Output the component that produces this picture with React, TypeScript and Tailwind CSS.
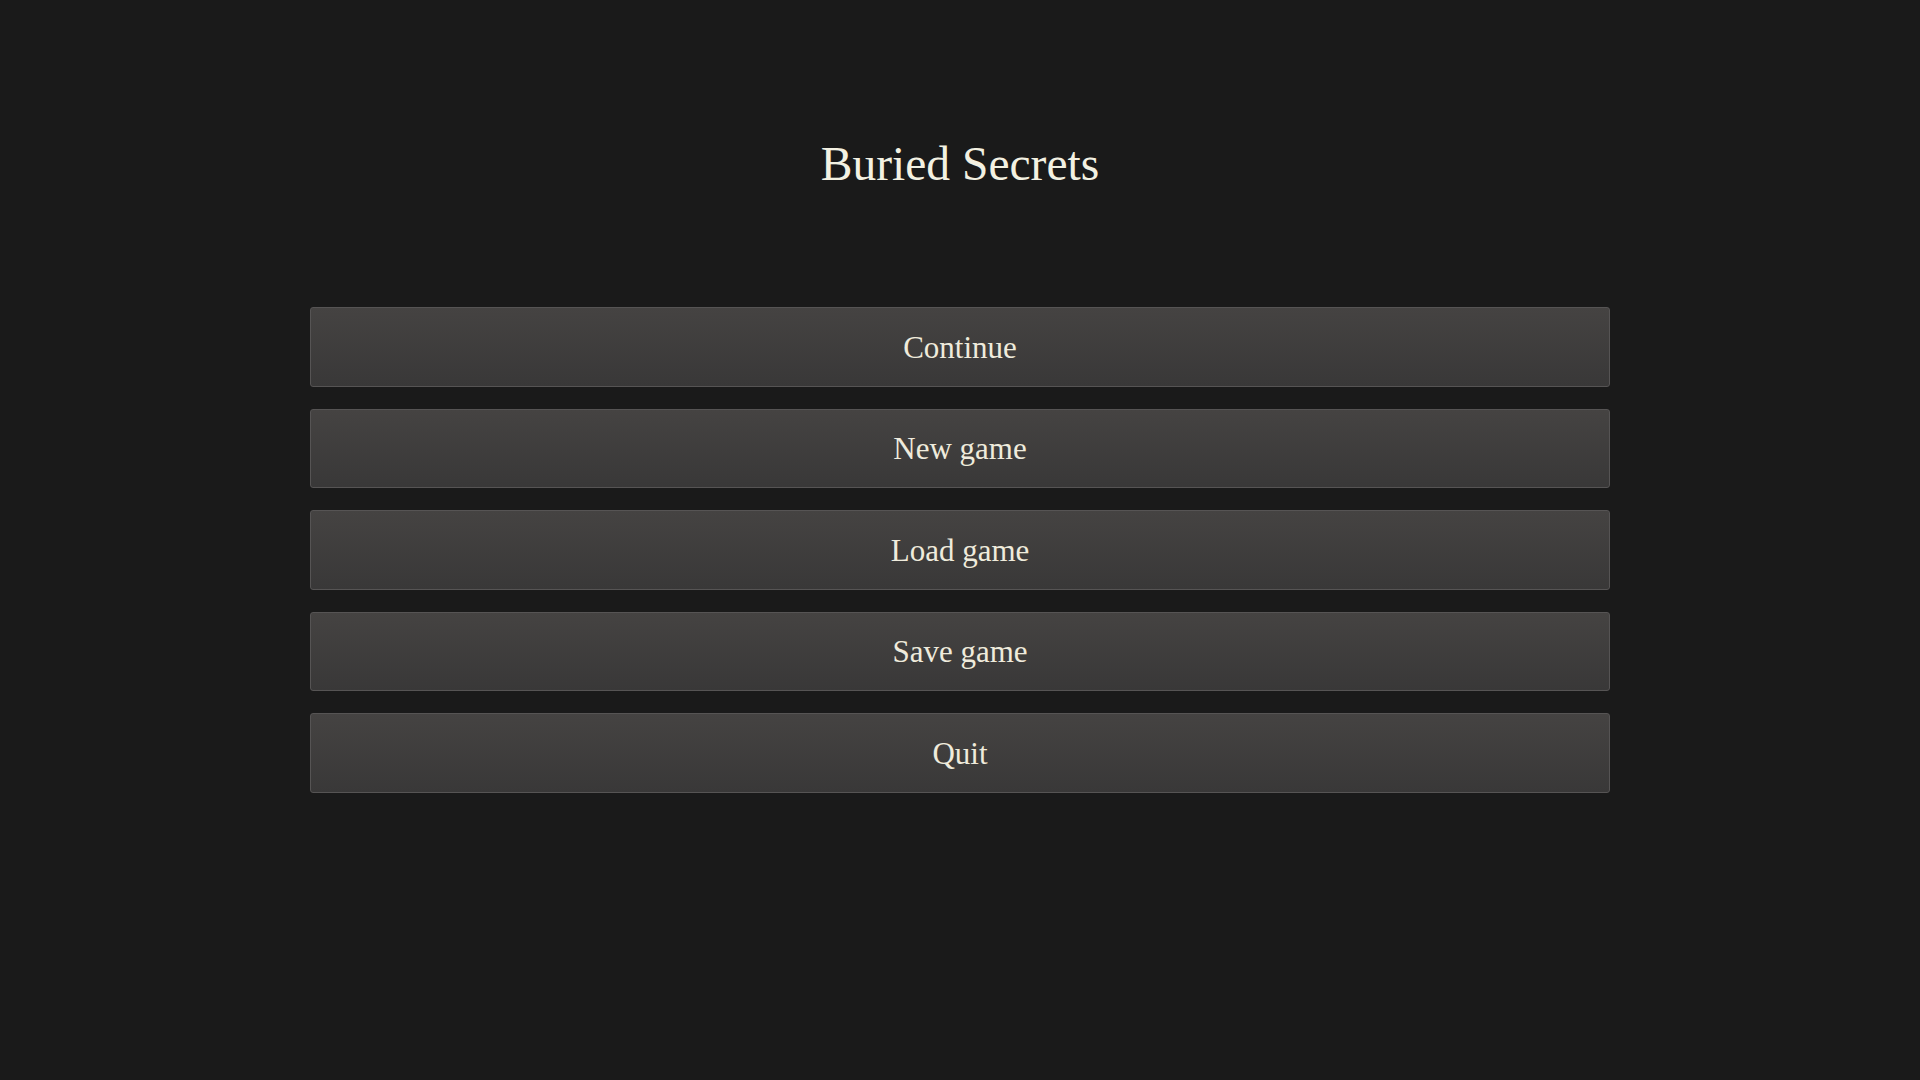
const items = ["Continue", "New game", "Load game", "Save game", "Quit"];

export default function App() {
  return (
    <div className="min-h-screen w-full bg-[#1a1a1a] font-['Liberation_Serif',serif]">
      <div className="mx-auto flex w-[1300px] flex-col items-center pt-[138px]">
        {/* Title */}
        <h1 className="text-[47.5px] leading-[53px] text-[#f3f1e2]">Buried Secrets</h1>

        {/* Menu */}
        <div className="mt-[116px] flex w-full flex-col gap-[22px]">
          {items.map((label) => (
            <button
              key={label}
              className="flex h-[79.5px] w-full items-center justify-center rounded-[3px] border border-[#565454] bg-gradient-to-b from-[#454342] to-[#393838] pt-[2px] text-[31px] text-[#efebdc]"
            >
              {label}
            </button>
          ))}
        </div>
      </div>
    </div>
  );
}
